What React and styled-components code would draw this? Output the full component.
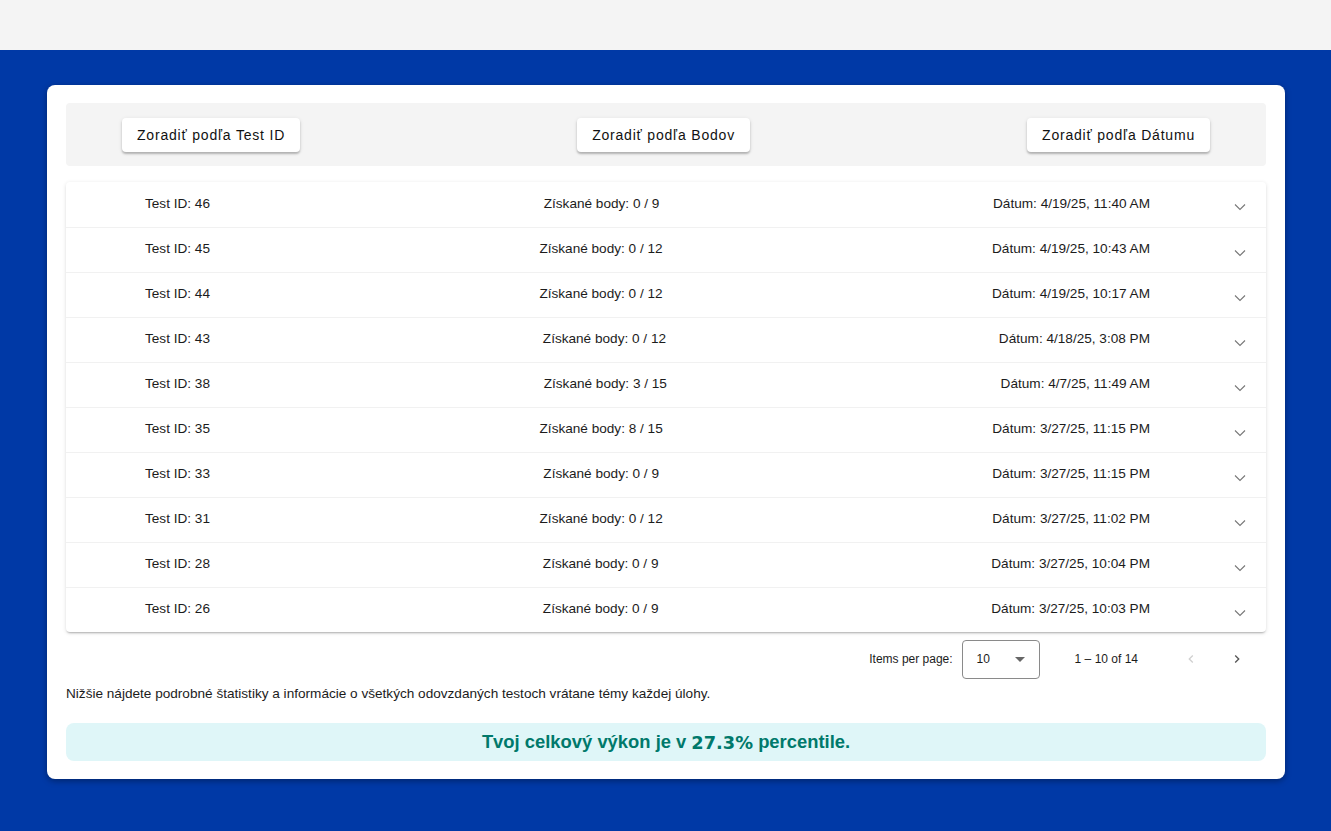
import styled, { createGlobalStyle } from "styled-components";

const GlobalStyle = createGlobalStyle`
  body {
    margin: 0;
    font-family: "Liberation Sans", Arial, sans-serif;
    color: #212121;
  }
`;

const TopBar = styled.div`
  height: 50px;
  background: #f4f4f4;
`;

const Stage = styled.div`
  background: #0039a6;
  min-height: calc(100vh - 50px);
  padding: 35px 46px 35px 47px;
  box-sizing: border-box;
`;

const Card = styled.div`
  background: #fff;
  border-radius: 8px;
  padding: 18px 19px;
  box-shadow: 0 2px 6px rgba(0, 0, 0, 0.35);
`;

const SortBar = styled.div`
  background: #f4f4f4;
  border-radius: 4px;
  height: 63px;
  padding: 0 56px;
  display: flex;
  align-items: center;
  justify-content: space-between;
`;

const SortButton = styled.button`
  height: 34px;
  padding: 0 15px;
  border: none;
  border-radius: 4px;
  background: #fff;
  font-family: "Liberation Sans", Arial, sans-serif;
  font-size: 14px;
  font-weight: 500;
  letter-spacing: 0.8px;
  color: #111;
  box-shadow: 0 2px 2px rgba(0, 0, 0, 0.22), 0 1px 4px rgba(0, 0, 0, 0.1);
  cursor: pointer;
`;

const List = styled.div`
  margin-top: 16px;
  border-radius: 4px;
  box-shadow: 0 2px 2px -1px rgba(0, 0, 0, 0.25), 0 1px 4px rgba(0, 0, 0, 0.12);
  background: #fff;
`;

const Row = styled.div`
  height: 45px;
  display: flex;
  align-items: center;
  padding: 0 19px 0 79px;
  font-size: 13.6px;
  color: #1c1c1c;
  box-sizing: border-box;
  border-top: ${(p) => (p.$first ? "none" : "1px solid #f1f1f1")};
`;

const RowContent = styled.div`
  flex: 1;
  display: flex;
  justify-content: space-between;
  padding-right: 83px;
  margin-top: -3px;
`;

const Chevron = styled.svg`
  width: 14px;
  height: 14px;
  margin-top: 5px;
  color: #777;
`;

const Paginator = styled.div`
  height: 54px;
  display: flex;
  align-items: center;
  justify-content: flex-end;
  font-size: 12px;
  color: #1c1c1c;
  padding-right: 9px;
`;

const PerPageLabel = styled.span`
  margin-right: 9px;
`;

const Select = styled.div`
  width: 78px;
  height: 39px;
  border: 1px solid #8a8a8a;
  border-radius: 4px;
  display: flex;
  align-items: center;
  justify-content: space-between;
  padding: 0 14px;
  box-sizing: border-box;
`;

const Caret = styled.span`
  width: 0;
  height: 0;
  border-left: 5px solid transparent;
  border-right: 5px solid transparent;
  border-top: 5px solid #666;
`;

const Range = styled.span`
  margin: 0 27px 0 35px;
`;

const NavButton = styled.button`
  width: 40px;
  height: 40px;
  border: none;
  background: transparent;
  display: flex;
  align-items: center;
  justify-content: center;
  color: ${(p) => (p.disabled ? "#d0d0d0" : "#555")};
  padding: 0;
  margin-left: 6px;
`;

const Note = styled.p`
  margin: 0;
  font-size: 13.6px;
  color: #1c1c1c;
  line-height: 16px;
`;

const Percentile = styled.div`
  margin-top: 21px;
  height: 38px;
  border-radius: 8px;
  background: #dff6f8;
  display: flex;
  align-items: center;
  justify-content: center;
  font-size: 18.4px;
  font-weight: 700;
  color: #00796b;
`;

const Num = styled.span`
  font-family: "DejaVu Sans", Verdana, sans-serif;
  font-size: 17.8px;
  margin: 0 0 0 5px;
`;

const tests = [
  [46, "0 / 9", "4/19/25, 11:40 AM"],
  [45, "0 / 12", "4/19/25, 10:43 AM"],
  [44, "0 / 12", "4/19/25, 10:17 AM"],
  [43, "0 / 12", "4/18/25, 3:08 PM"],
  [38, "3 / 15", "4/7/25, 11:49 AM"],
  [35, "8 / 15", "3/27/25, 11:15 PM"],
  [33, "0 / 9", "3/27/25, 11:15 PM"],
  [31, "0 / 12", "3/27/25, 11:02 PM"],
  [28, "0 / 9", "3/27/25, 10:04 PM"],
  [26, "0 / 9", "3/27/25, 10:03 PM"],
];

function Arrow({ dir }) {
  return (
    <svg width="16" height="16" viewBox="0 0 24 24">
      <path
        d={dir === "left" ? "M15.4 7.4 14 6l-6 6 6 6 1.4-1.4L10.8 12z" : "M8.6 16.6 10 18l6-6-6-6-1.4 1.4 4.6 4.6z"}
        fill="currentColor"
      />
    </svg>
  );
}

export default function App() {
  return (
    <>
      <GlobalStyle />
      <TopBar />
      <Stage>
        <Card>
          <SortBar>
            <SortButton>Zoradiť podľa Test ID</SortButton>
            <SortButton>Zoradiť podľa Bodov</SortButton>
            <SortButton>Zoradiť podľa Dátumu</SortButton>
          </SortBar>
          <List>
            {tests.map(([id, pts, date], i) => (
              <Row key={id} $first={i === 0}>
                <RowContent>
                  <span>Test ID: {id}</span>
                  <span>Získané body: {pts}</span>
                  <span>Dátum: {date}</span>
                </RowContent>
                <Chevron viewBox="0 0 14 14">
                  <path d="M2 4.5l5 5 5-5" fill="none" stroke="currentColor" strokeWidth="1.1" />
                </Chevron>
              </Row>
            ))}
          </List>
          <Paginator>
            <PerPageLabel>Items per page:</PerPageLabel>
            <Select>
              <span>10</span>
              <Caret />
            </Select>
            <Range>1 – 10 of 14</Range>
            <NavButton disabled>
              <Arrow dir="left" />
            </NavButton>
            <NavButton>
              <Arrow dir="right" />
            </NavButton>
          </Paginator>
          <Note>
            Nižšie nájdete podrobné štatistiky a informácie o všetkých odovzdaných testoch vrátane témy každej úlohy.
          </Note>
          <Percentile>
            Tvoj celkový výkon je v<Num>27.3%</Num>&nbsp;percentile.
          </Percentile>
        </Card>
      </Stage>
    </>
  );
}
